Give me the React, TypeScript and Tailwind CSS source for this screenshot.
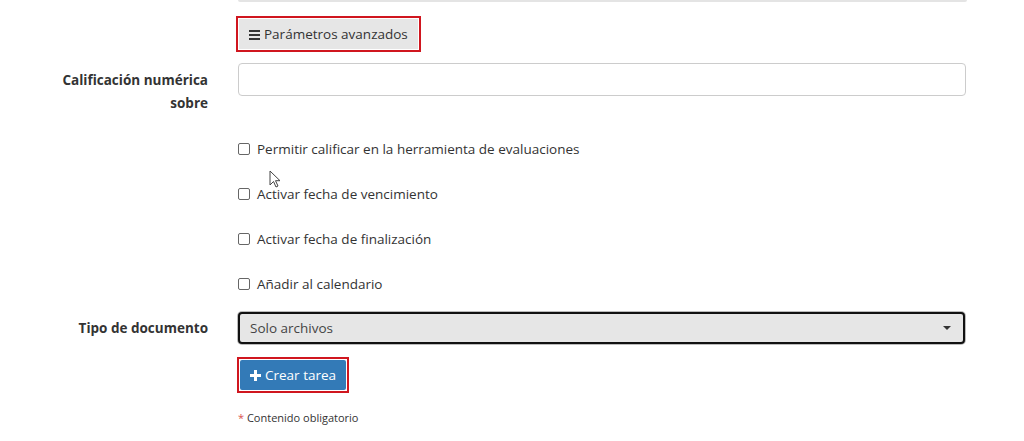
const checks = [
  "Permitir calificar en la herramienta de evaluaciones",
  "Activar fecha de vencimiento",
  "Activar fecha de finalización",
  "Añadir al calendario",
];

function Row({ label, children }: { label?: React.ReactNode; children: React.ReactNode }) {
  return (
    <div className="flex">
      <div className="w-[208px] shrink-0 text-right text-[13.5px] font-bold leading-[23px] text-[#333]">{label}</div>
      <div className="ml-[30px] w-[728px]">{children}</div>
    </div>
  );
}

export default function App() {
  return (
    <div
      className="relative h-[441px] w-[1024px] overflow-hidden bg-white text-[#333]"
      style={{ fontFamily: '"Open Sans", sans-serif' }}
    >
      {/* bottom edge of the previous field */}
      <div className="ml-[238px] h-[2px] w-[729px] rounded-b bg-[#e4e4e4]" />

      <div className="pt-[14px]">
        <Row>
          <div className="-ml-[2px] inline-block border-2 border-[#d0161f] p-[1px]">
            <button className="flex h-[30px] items-center gap-[4px] bg-[#e6e6e6] px-[10px] text-[13.5px] text-[#333]">
              <svg width="11" height="10" viewBox="0 0 11 10" className="mt-[1px]">
                <rect x="0" y="0" width="11" height="2" fill="#333" />
                <rect x="0" y="4" width="11" height="2" fill="#333" />
                <rect x="0" y="8" width="11" height="2" fill="#333" />
              </svg>
              Parámetros avanzados
            </button>
          </div>
        </Row>
      </div>

      <div className="mt-[11px]">
        <Row
          label={
            <div className="pt-[6px]">
              Calificación numérica
              <br />
              sobre
            </div>
          }
        >
          <input className="h-[33px] w-[728px] rounded-[4px] border border-[#ccc] bg-white" />
        </Row>
      </div>

      <div className="mt-[24px] flex flex-col gap-[25px]">
        {checks.map((c) => (
          <Row key={c}>
            <label className="flex h-[20px] items-center gap-[6px] text-[13.5px] text-[#333]">
              <span className="block h-[12px] w-[12px] rounded-[2px] border border-[#666] bg-white" />
              <span className="ml-[1px]">{c}</span>
            </label>
          </Row>
        ))}
      </div>

      <div className="mt-[18px]">
        <Row label={<div className="pt-[5px]">Tipo de documento</div>}>
          <div className="flex h-[32px] w-[727px] items-center justify-between rounded-[4px] border-2 border-[#111] bg-[#e6e6e6] pl-[10px] pr-[12px] text-[13.5px] text-[#444] shadow-[0_0_0_1px_#bbb]">
            Solo archivos
            <svg width="8" height="4" viewBox="0 0 8 4">
              <path d="M0 0h8L4 4z" fill="#333" />
            </svg>
          </div>
        </Row>
      </div>

      <div className="mt-[13px]">
        <Row>
          <div className="-ml-[1px] inline-block border-2 border-[#d0161f] p-[1px]">
            <button className="flex h-[30px] items-center gap-[4px] rounded-[2px] bg-[#337ab7] px-[10px] text-[13.5px] text-white">
              <svg width="11" height="11" viewBox="0 0 11 11">
                <path d="M4 0h3v4h4v3H7v4H4V7H0V4h4z" fill="#fff" />
              </svg>
              Crear tarea
            </button>
          </div>
        </Row>
      </div>

      <div className="mt-[17px]">
        <Row>
          <div className="text-[11px] text-[#333]">
            <span className="text-[#d9534f]">*</span> Contenido obligatorio
          </div>
        </Row>
      </div>

      {/* mouse cursor */}
      <svg className="absolute left-[269px] top-[170px]" width="13" height="19" viewBox="0 0 13 19">
        <path d="M1 1v14l3.5-3.5 2.5 5.5 2-1-2.5-5.3H11z" fill="#fff" stroke="#444" strokeWidth="1" strokeLinejoin="round" />
      </svg>
    </div>
  );
}
